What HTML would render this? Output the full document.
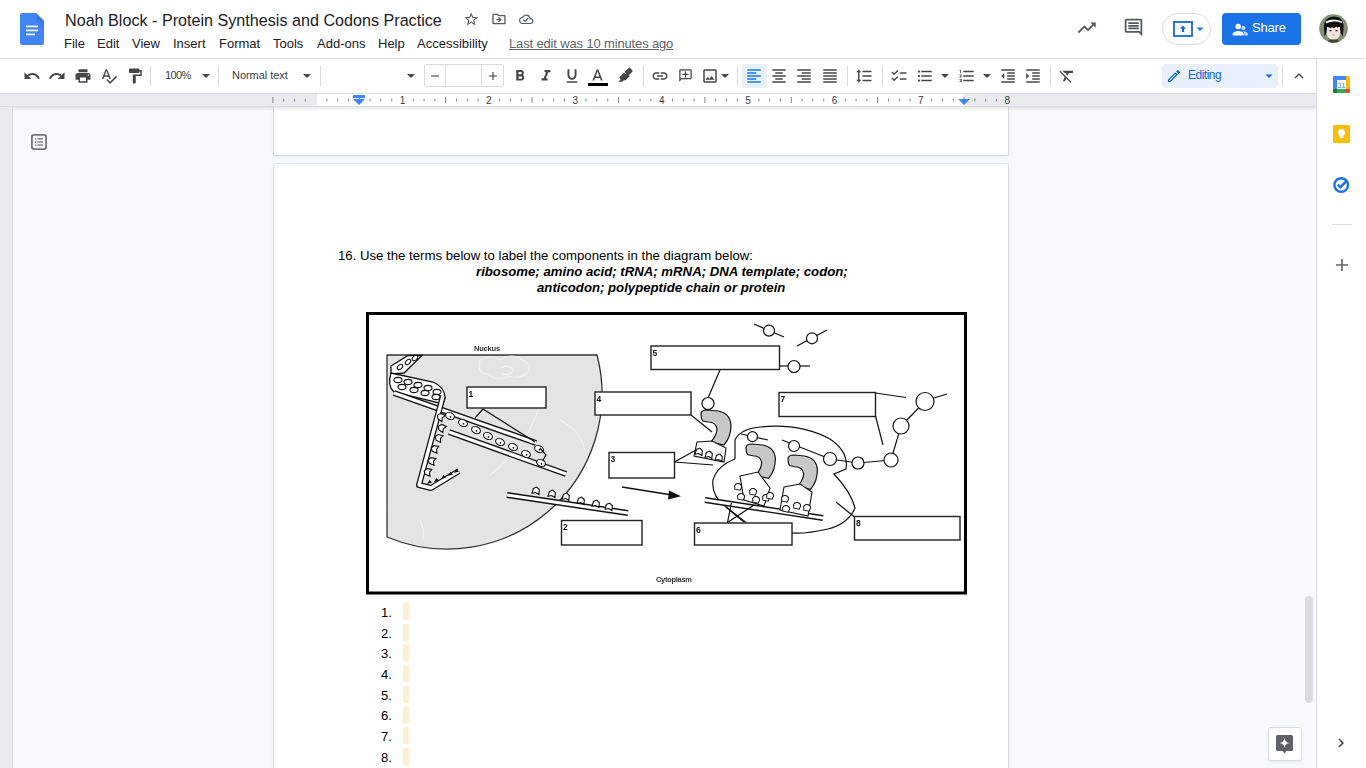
<!DOCTYPE html>
<html><head><meta charset="utf-8">
<style>
*{box-sizing:border-box;margin:0;padding:0}
html,body{width:1366px;height:768px;overflow:hidden;background:#fff;font-family:"Liberation Sans",sans-serif;color:#202124}
div,span{position:absolute}
#hdr{left:0;top:0;width:1366px;height:59px;background:#fff;border-bottom:1px solid #dadce0}
#title{left:65px;top:10px;font-size:16.15px;line-height:20px;color:#202124;white-space:nowrap}
.m{top:36px;font-size:13px;line-height:16px;color:#202124;white-space:nowrap}
#tb{left:0;top:59px;width:1316px;height:34px;background:#fff}
#ruler{left:0;top:93px;width:1316px;height:14px;background:#e9ebee;border-top:1px solid #dadce0}
#canvas{left:0;top:107px;width:1316px;height:661px;background:#f8f9fa;overflow:hidden}
#lstrip{left:0;top:107px;width:13px;height:661px;background:#e8eaed;border-right:1px solid #dadce0}
#side{left:1316px;top:59px;width:50px;height:709px;background:#fff;border-left:1px solid #dadce0}
.page{background:#fff;box-shadow:0 0 0 1px rgba(0,0,0,.06),0 1px 3px rgba(60,64,67,.15)}
.sep{top:66px;width:1px;height:20px;background:#dadce0}
svg{position:absolute;overflow:visible}
.ic{fill:#474747}
.tt{font-size:11px;line-height:14px;color:#3c4043;top:68px;white-space:nowrap}
.rn{top:94px;font-size:10px;line-height:12px;color:#3c4043}
.doc{font-size:13.2px;line-height:16px;color:#000;white-space:nowrap}
.num{left:381px;font-size:13.1px;line-height:16px;color:#000}
.hl{left:403px;width:6px;height:17px;background:#fdf0d2}
</style></head><body>
<div id="hdr"></div>
<div id="tb"></div>
<div id="ruler"></div>
<div id="canvas">
  <div class="page" style="left:274px;top:-200px;width:734px;height:248px"></div>
  <div class="page" style="left:274px;top:57px;width:734px;height:800px"></div>
</div>
<div id="lstrip"></div>
<div id="side"></div>
<svg style="left:0;top:94px" width="1316" height="13" viewBox="0 0 1316 13"><rect x="317" y="0" width="647" height="12" fill="#fff"/><g fill="#80868b"><rect x="272.4" y="3" width="1" height="6"/><rect x="283.2" y="4.7" width="1" height="2.8"/><rect x="294.0" y="4.7" width="1" height="2.8"/><rect x="304.8" y="4.7" width="1" height="2.8"/><rect x="326.4" y="4.7" width="1" height="2.8"/><rect x="337.2" y="4.7" width="1" height="2.8"/><rect x="348.0" y="4.7" width="1" height="2.8"/><rect x="358.8" y="3" width="1" height="6"/><rect x="369.6" y="4.7" width="1" height="2.8"/><rect x="380.4" y="4.7" width="1" height="2.8"/><rect x="391.2" y="4.7" width="1" height="2.8"/><rect x="412.8" y="4.7" width="1" height="2.8"/><rect x="423.6" y="4.7" width="1" height="2.8"/><rect x="434.4" y="4.7" width="1" height="2.8"/><rect x="445.2" y="3" width="1" height="6"/><rect x="456.0" y="4.7" width="1" height="2.8"/><rect x="466.8" y="4.7" width="1" height="2.8"/><rect x="477.6" y="4.7" width="1" height="2.8"/><rect x="499.2" y="4.7" width="1" height="2.8"/><rect x="510.0" y="4.7" width="1" height="2.8"/><rect x="520.8" y="4.7" width="1" height="2.8"/><rect x="531.6" y="3" width="1" height="6"/><rect x="542.4" y="4.7" width="1" height="2.8"/><rect x="553.2" y="4.7" width="1" height="2.8"/><rect x="564.0" y="4.7" width="1" height="2.8"/><rect x="585.6" y="4.7" width="1" height="2.8"/><rect x="596.4" y="4.7" width="1" height="2.8"/><rect x="607.2" y="4.7" width="1" height="2.8"/><rect x="618.0" y="3" width="1" height="6"/><rect x="628.8" y="4.7" width="1" height="2.8"/><rect x="639.6" y="4.7" width="1" height="2.8"/><rect x="650.4" y="4.7" width="1" height="2.8"/><rect x="672.0" y="4.7" width="1" height="2.8"/><rect x="682.8" y="4.7" width="1" height="2.8"/><rect x="693.6" y="4.7" width="1" height="2.8"/><rect x="704.4" y="3" width="1" height="6"/><rect x="715.2" y="4.7" width="1" height="2.8"/><rect x="726.0" y="4.7" width="1" height="2.8"/><rect x="736.8" y="4.7" width="1" height="2.8"/><rect x="758.4" y="4.7" width="1" height="2.8"/><rect x="769.2" y="4.7" width="1" height="2.8"/><rect x="780.0" y="4.7" width="1" height="2.8"/><rect x="790.8" y="3" width="1" height="6"/><rect x="801.6" y="4.7" width="1" height="2.8"/><rect x="812.4" y="4.7" width="1" height="2.8"/><rect x="823.2" y="4.7" width="1" height="2.8"/><rect x="844.8" y="4.7" width="1" height="2.8"/><rect x="855.6" y="4.7" width="1" height="2.8"/><rect x="866.4" y="4.7" width="1" height="2.8"/><rect x="877.2" y="3" width="1" height="6"/><rect x="888.0" y="4.7" width="1" height="2.8"/><rect x="898.8" y="4.7" width="1" height="2.8"/><rect x="909.6" y="4.7" width="1" height="2.8"/><rect x="931.2" y="4.7" width="1" height="2.8"/><rect x="942.0" y="4.7" width="1" height="2.8"/><rect x="952.8" y="4.7" width="1" height="2.8"/><rect x="963.6" y="3" width="1" height="6"/><rect x="974.4" y="4.7" width="1" height="2.8"/><rect x="985.2" y="4.7" width="1" height="2.8"/><rect x="996.0" y="4.7" width="1" height="2.8"/></g><g fill="#3c4043" font-size="10" text-anchor="middle" font-family="Liberation Sans"><text x="402.5" y="9.5">1</text><text x="488.9" y="9.5">2</text><text x="575.3" y="9.5">3</text><text x="661.7" y="9.5">4</text><text x="748.1" y="9.5">5</text><text x="834.5" y="9.5">6</text><text x="920.9" y="9.5">7</text><text x="1007.3" y="9.5">8</text></g><path d="M353 1h12v3h-12z M353 5h12l-6 6z" fill="#4285f4"/><path d="M958 5h12l-6 6z" fill="#4285f4"/></svg>
<div style="left:0;top:106px;width:1316px;height:1px;background:#dadce0"></div><div style="left:13px;top:107px;width:1303px;height:4px;background:linear-gradient(rgba(60,64,67,.12),rgba(60,64,67,0))"></div>
<!-- HEADER -->
<svg style="left:20px;top:13px" width="24" height="32" viewBox="0 0 24 32">
  <path d="M2.5 0H16L24 8V29.5A2.5 2.5 0 0 1 21.5 32H2.5A2.5 2.5 0 0 1 0 29.5V2.5A2.5 2.5 0 0 1 2.5 0Z" fill="#4285f4"/>
  <path d="M16 0L24 8H18A2 2 0 0 1 16 6Z" fill="#3b78e7"/>
  <path d="M16 8L24 16V8Z" fill="#3d73d6" opacity=".5"/>
  <rect x="6" y="12.5" width="12" height="1.8" fill="#f1f1f1"/>
  <rect x="6" y="16.5" width="12" height="1.8" fill="#f1f1f1"/>
  <rect x="6" y="20.5" width="9" height="1.8" fill="#f1f1f1"/>
</svg>
<div id="title">Noah Block - Protein Synthesis and Codons Practice</div>
<svg style="left:463.3px;top:10.8px" width="16.5" height="16.5" viewBox="0 0 24 24"><path fill="#555a5e" d="M22 9.24l-7.19-.62L12 2 9.19 8.63 2 9.24l5.46 4.73L5.82 21 12 17.27 18.18 21l-1.63-7.03L22 9.24zM12 15.4l-3.76 2.27 1-4.28-3.32-2.88 4.38-.38L12 6.1l1.71 4.04 4.38.38-3.32 2.88 1 4.28L12 15.4z"/></svg>
<svg style="left:490.6px;top:10.5px" width="16" height="16" viewBox="0 0 24 24"><path fill="#555a5e" d="M20 6h-8l-2-2H4c-1.1 0-1.99.9-1.99 2L2 18c0 1.1.9 2 2 2h16c1.1 0 2-.9 2-2V8c0-1.1-.9-2-2-2zm0 12H4V6h5.17l2 2H20v10zm-7.84-6H8v2h4.16l-1.59 1.59L11.99 17 16 13.01 11.99 9l-1.41 1.41L12.16 12z"/></svg>
<svg style="left:518.5px;top:11.6px" width="14.5" height="14.5" viewBox="0 0 24 24"><path fill="#555a5e" d="M19.35 10.04C18.67 6.59 15.64 4 12 4 9.11 4 6.6 5.64 5.35 8.04 2.34 8.36 0 10.91 0 14c0 3.31 2.69 6 6 6h13c2.760 0 5-2.24 5-5 0-2.64-2.05-4.78-4.65-4.96zM19 18H6c-2.21 0-4-1.790-4-4 0-2.05 1.53-3.76 3.56-3.97l1.07-.11.5-.95C8.08 7.14 9.94 6 12 6c2.62 0 4.88 1.86 5.39 4.43l.3 1.5 1.53.11c1.56.1 2.78 1.41 2.78 2.96 0 1.65-1.35 3-3 3zm-9-3.82l-2.09-2.09L6.5 13.5 10 17l6.01-6.01-1.41-1.41z"/></svg>
<div class="m" style="left:64px">File</div>
<div class="m" style="left:97px">Edit</div>
<div class="m" style="left:132px">View</div>
<div class="m" style="left:173px">Insert</div>
<div class="m" style="left:219px">Format</div>
<div class="m" style="left:273px">Tools</div>
<div class="m" style="left:317px">Add-ons</div>
<div class="m" style="left:378px">Help</div>
<div class="m" style="left:417px">Accessibility</div>
<div class="m" style="left:509px;color:#5f6368;text-decoration:underline;letter-spacing:-0.15px">Last edit was 10 minutes ago</div>
<!-- right header -->
<svg style="left:1075.8px;top:17.2px" width="21.5" height="21.5" viewBox="0 0 24 24"><path fill="#555a5e" d="M16 6l2.29 2.29-4.88 4.88-4-4L2 16.59 3.41 18l6-6 4 4 6.3-6.29L22 12V6z"/></svg>
<svg style="left:1122.6px;top:17.4px" width="21" height="21" viewBox="0 0 24 24"><path fill="#555a5e" d="M21.99 4c0-1.1-.89-2-1.99-2H4c-1.1 0-2 .9-2 2v12c0 1.1.9 2 2 2h14l4 4-.01-18zM20 4v13.17L18.83 16H4V4h16zM6 12h12v2H6zm0-3h12v2H6zm0-3h12v2H6z"/></svg>
<div style="left:1162px;top:13px;width:49px;height:32px;border:1px solid #dadce0;border-radius:16px;background:#fff"></div>
<svg style="left:1173px;top:21px" width="20" height="16" viewBox="0 0 20 16"><rect x="1" y="1" width="18" height="14" fill="none" stroke="#1967d2" stroke-width="1.8"/><path d="M10 4.5l-3.2 3.2h2.1V11h2.2V7.7h2.1z" fill="#1967d2"/></svg>
<svg style="left:1195px;top:24px" width="10" height="10" viewBox="0 0 10 10"><path d="M1.5 3.5h7L5 7z" fill="#1a73e8"/></svg>
<div style="left:1222px;top:13px;width:79px;height:32px;background:#1a73e8;border-radius:4px"></div>
<svg style="left:1232px;top:21px" width="16.5" height="16.5" viewBox="0 0 24 24"><circle cx="9" cy="8" r="4" fill="#fff"/><path d="M1 19c0-3 5-4.5 8-4.5s8 1.5 8 4.5v2H1z" fill="#fff"/><circle cx="16.5" cy="10" r="3" fill="#c6dafc"/><path d="M15 15c3 0 8 1 8 4v2h-5v-2c0-1.5-1-3-3-4z" fill="#c6dafc"/></svg>
<div style="left:1252px;top:19.5px;font-size:13px;line-height:16px;color:#fff;letter-spacing:-0.2px">Share</div>
<svg style="left:1319px;top:14px" width="29" height="29" viewBox="0 0 29 29">
  <circle cx="14.5" cy="14.5" r="14.3" fill="#838f73"/>
  <path d="M5 14Q4 4 14.5 2.5Q25 3 24.5 13L24 22L20 18H9L5.5 22Z" fill="#0d0d0d"/>
  <path d="M8 13Q14 11 21 13L21.5 20Q19 26 14.5 26Q9.5 26 7.5 20Z" fill="#efe4dc"/>
  <path d="M7.5 11Q11 16 13 13Q15 15.5 17 12.5Q19 15 21.5 11L21 8H8Z" fill="#0d0d0d"/>
  <path d="M6.5 7.5Q14.5 3.5 23 7.5L22.5 9Q14.5 6 7 9.5Z" fill="#f2f2f2"/>
  <rect x="10.5" y="16" width="2" height="1.3" fill="#222"/><rect x="16.5" y="16" width="2" height="1.3" fill="#222"/>
  <ellipse cx="14.5" cy="21" rx="1.5" ry="1" fill="#e8b8b0"/>
  <path d="M9 27.5Q14.5 30 20 27.5L19 25.5H10Z" fill="#3a4a35"/>
</svg>
<!-- TOOLBAR -->
<svg style="left:23px;top:67px" width="18" height="18" viewBox="0 0 24 24"><path class="ic" d="M12.5 8c-2.650 0-5.05.99-6.9 2.6L2 7v9h9l-3.62-3.62c1.39-1.16 3.16-1.88 5.12-1.880 3.54 0 6.55 2.31 7.6 5.5l2.37-.78C21.08 11.03 17.15 8 12.5 8z"/></svg>
<svg style="left:48px;top:67px" width="18" height="18" viewBox="0 0 24 24"><path class="ic" d="M18.4 10.6C16.55 8.99 14.15 8 11.5 8c-4.65 0-8.58 3.03-9.96 7.22L3.9 16c1.05-3.19 4.05-5.5 7.6-5.5 1.95 0 3.73.72 5.12 1.88L13 16h9V7l-3.6 3.6z"/></svg>
<svg style="left:74px;top:67px" width="18" height="18" viewBox="0 0 24 24"><path class="ic" d="M19 8H5c-1.66 0-3 1.34-3 3v6h4v4h12v-4h4v-6c0-1.66-1.34-3-3-3zm-3 11H8v-5h8v5zm3-7c-.55 0-1-.45-1-1s.45-1 1-1 1 .45 1 1-.45 1-1 1zm-1-9H6v4h12V3z"/></svg>
<svg style="left:100px;top:67px" width="18" height="18" viewBox="0 0 24 24"><path class="ic" d="M12.45 16h2.09L9.43 3H7.57L2.46 16h2.09l1.12-3h5.640l1.14 3zm-6.02-5L8.5 5.48 10.57 11H6.43zm15.16.59l-8.09 8.09L9.83 16l-1.41 1.41 5.09 5.09L23 13l-1.41-1.41z"/></svg>
<svg style="left:126px;top:67px" width="18" height="18" viewBox="0 0 24 24"><path class="ic" d="M18 4V3c0-.55-.45-1-1-1H5c-.55 0-1 .45-1 1v4c0 .55.45 1 1 1h12c.55 0 1-.45 1-1V6h1v4H9v11c0 .55.45 1 1 1h2c.55 0 1-.45 1-1v-9h8V4h-3z"/></svg>
<div class="sep" style="left:150px"></div>
<div class="tt" style="left:165px;letter-spacing:-0.6px">100%</div>
<svg style="left:200px;top:70px" width="12" height="12" viewBox="0 0 12 12"><path class="ic" d="M2 4h8L6 8z"/></svg>
<div class="sep" style="left:218px"></div>
<div class="tt" style="left:232px;letter-spacing:-0.05px">Normal text</div>
<svg style="left:301px;top:70px" width="12" height="12" viewBox="0 0 12 12"><path class="ic" d="M2 4h8L6 8z"/></svg>
<div class="sep" style="left:320px"></div>
<svg style="left:405px;top:70px" width="12" height="12" viewBox="0 0 12 12"><path class="ic" d="M2 4h8L6 8z"/></svg>
<div style="left:424px;top:64px;width:80px;height:23px;border:1px solid #dadce0;border-radius:2px"></div>
<div style="left:445px;top:65px;width:1px;height:21px;background:#dadce0"></div>
<div style="left:481px;top:65px;width:1px;height:21px;background:#dadce0"></div>
<svg style="left:428px;top:69px" width="14" height="14" viewBox="0 0 24 24"><path class="ic" d="M19 13H5v-2h14v2z"/></svg>
<svg style="left:486px;top:69px" width="14" height="14" viewBox="0 0 24 24"><path class="ic" d="M19 13h-6v6h-2v-6H5v-2h6V5h2v6h6v2z"/></svg>
<svg style="left:511px;top:67px" width="18" height="18" viewBox="0 0 24 24"><path class="ic" d="M15.6 10.79c.97-.67 1.65-1.77 1.65-2.79 0-2.26-1.75-4-4-4H7v14h7.04c2.09 0 3.71-1.7 3.71-3.79 0-1.52-.86-2.82-2.15-3.42zM10 6.5h3c.83 0 1.5.67 1.5 1.5s-.67 1.5-1.5 1.5h-3v-3zm3.5 9H10v-3h3.5c.83 0 1.5.67 1.5 1.5s-.67 1.5-1.5 1.5z"/></svg>
<svg style="left:537px;top:67px" width="18" height="18" viewBox="0 0 24 24"><path class="ic" d="M10 4v3h2.21l-3.42 8H6v3h8v-3h-2.21l3.42-8H18V4z"/></svg>
<svg style="left:563px;top:67px" width="18" height="18" viewBox="0 0 24 24"><path class="ic" d="M12 17c3.31 0 6-2.69 6-6V3h-2.5v8c0 1.93-1.57 3.5-3.5 3.5S8.5 12.93 8.5 11V3H6v8c0 3.31 2.690 6 6 6zm-7 2v2h14v-2H5z"/></svg>
<svg style="left:588px;top:67px" width="19" height="19" viewBox="0 0 24 24"><path class="ic" d="M11 3L5.5 17h2.25l1.12-3h6.25l1.12 3h2.25L13 3h-2zm-1.38 9L12 5.67 14.38 12H9.62z"/></svg>
<div style="left:588px;top:83px;width:20px;height:3px;background:#000"></div>
<svg style="left:617px;top:67px" width="16" height="16" viewBox="0 0 24 24"><path class="ic" d="M18.5 1.15c-.53 0-1.04.19-1.43.58l-5.81 5.82 5.65 5.65 5.82-5.81c.77-.78.77-2.04 0-2.83l-2.84-2.83c-.39-.39-.89-.58-1.39-.58zM10.3 8.5l-5.96 5.96c-.78.78-.78 2.04 0 2.83L5.59 18.5 2 22h6l2.56-2.56c.78.75 2.03.74 2.79-.02l5.95-5.96L10.3 8.5z"/></svg>
<div class="sep" style="left:643px"></div>
<svg style="left:651px;top:67px" width="18" height="18" viewBox="0 0 24 24"><path class="ic" d="M3.9 12c0-1.71 1.39-3.1 3.1-3.1h4V7H7c-2.76 0-5 2.24-5 5s2.24 5 5 5h4v-1.9H7c-1.71 0-3.1-1.39-3.1-3.1zM8 13h8v-2H8v2zm9-6h-4v1.9h4c1.71 0 3.1 1.39 3.1 3.1s-1.39 3.1-3.1 3.1h-4V17h4c2.76 0 5-2.24 5-5s-2.24-5-5-5z"/></svg>
<svg style="left:677.7px;top:67.9px" width="15" height="15" viewBox="0 0 24 24"><g transform="translate(24 0) scale(-1 1)"><path class="ic" d="M22 4c0-1.1-.9-2-2-2H4c-1.1 0-2 .9-2 2v12c0 1.1.9 2 2 2h14l4 4V4zm-2 13.17L18.83 16H4V4h16v13.17zM13 5h-2v4H7v2h4v4h2v-4h4V9h-4z"/></g></svg>
<svg style="left:701px;top:67px" width="18" height="18" viewBox="0 0 24 24"><path class="ic" d="M19 5v14H5V5h14m0-2H5c-1.1 0-2 .9-2 2v14c0 1.1.9 2 2 2h14c1.1 0 2-.9 2-2V5c0-1.1-.9-2-2-2zm-4.86 8.86l-3 3.87L9 13.14 6 17h12l-3.86-5.14z"/></svg>
<svg style="left:719px;top:70px" width="12" height="12" viewBox="0 0 12 12"><path class="ic" d="M2 4h8L6 8z"/></svg>
<div class="sep" style="left:737px"></div>
<div style="left:742px;top:64px;width:25px;height:24px;background:#e8f0fe;border-radius:2px"></div>
<svg style="left:745px;top:67px" width="18" height="18" viewBox="0 0 24 24"><path fill="#1a73e8" d="M15 15H3v2h12v-2zm0-8H3v2h12V7zM3 13h18v-2H3v2zm0 8h18v-2H3v2zM3 3v2h18V3H3z"/></svg>
<svg style="left:770px;top:67px" width="18" height="18" viewBox="0 0 24 24"><path class="ic" d="M7 15v2h10v-2H7zm-4 6h18v-2H3v2zm0-8h18v-2H3v2zm4-6v2h10V7H7zM3 3v2h18V3H3z"/></svg>
<svg style="left:795px;top:67px" width="18" height="18" viewBox="0 0 24 24"><path class="ic" d="M3 21h18v-2H3v2zm6-4h12v-2H9v2zm-6-4h18v-2H3v2zm6-4h12V7H9v2zM3 3v2h18V3H3z"/></svg>
<svg style="left:821px;top:67px" width="18" height="18" viewBox="0 0 24 24"><path class="ic" d="M3 21h18v-2H3v2zm0-4h18v-2H3v2zm0-4h18v-2H3v2zm0-4h18V7H3v2zm0-6v2h18V3H3z"/></svg>
<div class="sep" style="left:847px"></div>
<svg style="left:855px;top:67px" width="18" height="18" viewBox="0 0 24 24"><path class="ic" d="M6 7h2.5L5 3.5 1.5 7H4v10H1.5L5 20.5 8.5 17H6V7zm4-2v2h12V5H10zm0 14h12v-2H10v2zm0-6h12v-2H10v2z"/></svg>
<div class="sep" style="left:882px"></div>
<svg style="left:890px;top:67px" width="18" height="18" viewBox="0 0 24 24"><path class="ic" d="M22,7h-9v2h9V7z M22,15h-9v2h9V15z M5.54,11L2,7.46l1.41-1.41l2.12,2.12l4.24-4.24l1.41,1.41L5.54,11z M5.54,19L2,15.46l1.41-1.41 l2.12,2.12l4.24-4.24l1.41,1.41L5.54,19z"/></svg>
<svg style="left:916px;top:67px" width="18" height="18" viewBox="0 0 24 24"><path class="ic" d="M4 10.5c-.83 0-1.5.67-1.5 1.5s.67 1.5 1.5 1.5 1.5-.67 1.5-1.5-.67-1.5-1.5-1.5zm0-6c-.83 0-1.5.67-1.5 1.5S3.17 7.5 4 7.5 5.5 6.83 5.5 6 4.83 4.5 4 4.5zm0 12c-.83 0-1.5.68-1.5 1.5s.68 1.5 1.5 1.5 1.5-.68 1.5-1.5-.67-1.5-1.5-1.5zM7 19h14v-2H7v2zm0-6h14v-2H7v2zm0-8v2h14V5H7z"/></svg>
<svg style="left:939px;top:70px" width="12" height="12" viewBox="0 0 12 12"><path class="ic" d="M2 4h8L6 8z"/></svg>
<svg style="left:958px;top:67px" width="18" height="18" viewBox="0 0 24 24"><path class="ic" d="M2 17h2v.5H3v1h1v.5H2v1h3v-4H2v1zm1-9h1V4H2v1h1v3zm-1 3h1.8L2 13.1v.9h3v-1H3.2L5 10.9V10H2v1zm5-6v2h14V5H7zm0 14h14v-2H7v2zm0-6h14v-2H7v2z"/></svg>
<svg style="left:981px;top:70px" width="12" height="12" viewBox="0 0 12 12"><path class="ic" d="M2 4h8L6 8z"/></svg>
<svg style="left:999px;top:67px" width="18" height="18" viewBox="0 0 24 24"><path class="ic" d="M11 17h10v-2H11v2zm-8-5l4 4V8l-4 4zm0 9h18v-2H3v2zM3 3v2h18V3H3zm8 6h10V7H11v2zm0 4h10v-2H11v2z"/></svg>
<svg style="left:1024px;top:67px" width="18" height="18" viewBox="0 0 24 24"><path class="ic" d="M3 21h18v-2H3v2zM3 8v8l4-4-4-4zm8 9h10v-2H11v2zM3 3v2h18V3H3zm8 6h10V7H11v2zm0 4h10v-2H11v2z"/></svg>
<div class="sep" style="left:1050px"></div>
<svg style="left:1058px;top:67px" width="18" height="18" viewBox="0 0 24 24"><path class="ic" d="M3.27 5L2 6.27l6.97 6.97L6.5 19h3l1.57-3.66L16.73 21 18 19.73 3.55 5.27 3.27 5zM6 5v.18L8.82 8h2.4l-.72 1.68 2.1 2.1L14.21 8H20V5H6z"/></svg>
<div style="left:1162px;top:64px;width:116px;height:24px;background:#e8f0fe;border-radius:4px"></div>
<svg style="left:1166px;top:68px" width="16" height="16" viewBox="0 0 24 24"><path fill="#1967d2" d="M3 17.25V21h3.75L17.81 9.94l-3.75-3.75L3 17.25zM5.92 19H5v-.92l9.06-9.06.92.92L5.92 19zM20.71 5.63l-2.34-2.34c-.2-.2-.45-.29-.71-.29s-.51.1-.7.29l-1.83 1.83 3.75 3.75 1.83-1.830c.39-.39.39-1.02 0-1.41z"/></svg>
<div style="left:1188px;top:68px;font-size:12px;line-height:15px;color:#1967d2;letter-spacing:-0.5px">Editing</div>
<svg style="left:1263px;top:70px" width="12" height="12" viewBox="0 0 12 12"><path fill="#1967d2" d="M2.5 4.5h7L6 8z"/></svg>
<div class="sep" style="left:1282px"></div>
<svg style="left:1290px;top:67px" width="18" height="18" viewBox="0 0 24 24"><path class="ic" d="M12 8l-6 6 1.41 1.41L12 10.83l4.59 4.58L18 14z"/></svg>

<!-- LEFT OUTLINE ICON -->
<svg style="left:31px;top:134px" width="16" height="16" viewBox="0 0 16 16"><rect x="0.9" y="0.9" width="14.2" height="14.2" rx="2" fill="none" stroke="#757575" stroke-width="1.8"/><g fill="#757575"><rect x="4" y="4.2" width="1.3" height="1.3"/><rect x="6.5" y="4.2" width="5.5" height="1.3"/><rect x="4" y="7.3" width="1.3" height="1.3"/><rect x="6.5" y="7.3" width="5.5" height="1.3"/><rect x="4" y="10.4" width="1.3" height="1.3"/><rect x="6.5" y="10.4" width="5.5" height="1.3"/></g></svg>
<!-- SIDE PANEL -->
<svg style="left:1333px;top:76px" width="17" height="17" viewBox="0 0 17 17">
 <rect x="0" y="0" width="17" height="17" rx="1.5" fill="#fbbc04"/>
 <path d="M0 4V15.5A1.5 1.5 0 0 0 1.5 17H13V13H4V4Z" fill="#34a853"/>
 <path d="M0 4V15.5A1.5 1.5 0 0 0 1.5 17H4V4Z" fill="#188038"/>
 <path d="M0 1.5A1.5 1.5 0 0 1 1.5 0H13V4H4V13H0Z" fill="#4285f4"/>
 <path d="M13 13H17V15.5A1.5 1.5 0 0 1 15.5 17H13Z" fill="#ea4335"/>
 <rect x="4" y="4" width="9" height="9" fill="#fff"/>
 <text x="8.5" y="11.6" font-size="7" text-anchor="middle" fill="#4285f4" font-family="Liberation Sans">31</text>
</svg>
<svg style="left:1333px;top:125px" width="17" height="18" viewBox="0 0 17 18">
 <rect x="0" y="0" width="17" height="18" rx="1.5" fill="#fbbc04"/>
 <circle cx="8.5" cy="7.5" r="3.5" fill="#fff"/><rect x="6.8" y="10" width="3.4" height="3" fill="#fff"/>
</svg>
<svg style="left:1333px;top:176px" width="17" height="17" viewBox="0 0 17 17">
 <circle cx="8.2" cy="9" r="6.8" fill="none" stroke="#1a73e8" stroke-width="2.4"/>
 <path d="M4.8 8.6l2.6 2.6 6-6" fill="none" stroke="#1a73e8" stroke-width="2.4"/>
</svg>
<div style="left:1332px;top:224px;width:20px;height:1px;background:#dadce0"></div>
<svg style="left:1335px;top:258px" width="14" height="14" viewBox="0 0 14 14"><path d="M6.2 1h1.6v12H6.2z M1 6.2h12v1.6H1z" fill="#5f6368"/></svg>
<svg style="left:1332px;top:734px" width="18" height="18" viewBox="0 0 24 24"><path class="ic" d="M10 6L8.59 7.41 13.17 12l-4.58 4.59L10 18l6-6z"/></svg>
<!-- SCROLLBAR -->
<div style="left:1305px;top:596px;width:8px;height:107px;background:#dadce0;border-radius:4px"></div>
<!-- EXPLORE -->
<div style="left:1268px;top:727px;width:34px;height:34px;background:#fff;border:1px solid #dadce0;border-radius:3px;box-shadow:0 1px 2px rgba(0,0,0,.08)"></div>
<svg style="left:1276px;top:735px" width="17" height="19" viewBox="0 0 17 19"><path d="M1.5 0H15.5A1.5 1.5 0 0 1 17 1.5V14.5A1.5 1.5 0 0 1 15.5 16H10.5L8.5 18.5L6.5 16H1.5A1.5 1.5 0 0 1 0 14.5V1.5A1.5 1.5 0 0 1 1.5 0Z" fill="#5f6368"/><path d="M8.5 3Q9 7.5 13.5 8Q9 8.5 8.5 13Q8 8.5 3.5 8Q8 7.5 8.5 3Z" fill="#fff"/></svg>
<!-- DOC TEXT -->
<div class="doc" style="left:338px;top:248px">16. Use the terms below to label the components in the diagram below:</div>
<div class="doc" style="left:476px;top:264px;font-weight:bold;font-style:italic">ribosome; amino acid; tRNA; mRNA; DNA template; codon;</div>
<div class="doc" style="left:537px;top:280px;font-weight:bold;font-style:italic">anticodon; polypeptide chain or protein</div>
<!-- LIST -->
<div class="hl" style="top:603px"></div><div class="hl" style="top:624px"></div><div class="hl" style="top:644px"></div><div class="hl" style="top:665px"></div><div class="hl" style="top:686px"></div><div class="hl" style="top:706px"></div><div class="hl" style="top:727px"></div><div class="hl" style="top:748px"></div>
<div class="num" style="top:605px">1.</div><div class="num" style="top:626px">2.</div><div class="num" style="top:646px">3.</div><div class="num" style="top:667px">4.</div><div class="num" style="top:688px">5.</div><div class="num" style="top:708px">6.</div><div class="num" style="top:729px">7.</div><div class="num" style="top:750px">8.</div>
<!-- DIAGRAM -->
<svg style="left:0;top:0;filter:blur(0.3px)" width="1366" height="768" viewBox="0 0 1366 768"><rect x="367.5" y="313.5" width="598" height="279.5" fill="#fff" stroke="#000" stroke-width="3"/><path d="M387,355 H597 A155,155 0 0 1 387,537 Z" fill="#e4e4e4" stroke="#333" stroke-width="1.3"/><g fill="none" stroke="#f2f2f2" stroke-width="1.2" opacity=".9"><path d="M480,360 q10,-6 20,0 q12,-8 22,0 q10,4 6,12 q-8,8 -20,4 q-10,6 -20,-2 q-12,0 -8,-14z"/><path d="M500,368 q8,-4 14,2 q-4,6 -12,4"/><path d="M540,405 q-6,20 -20,40 q-10,15 -30,30"/><path d="M560,420 q20,10 25,30"/><path d="M420,520 q5,10 3,20"/></g><text x="474" y="351" font-size="7.5" font-weight="bold" fill="#333" font-family="Liberation Sans" letter-spacing="-0.2">Nuckus</text><path d="M408,355.5 L422,355.5 L404,373 L391,374 L391,366 Z" fill="#fff" stroke="#111" stroke-width="1.3"/><ellipse cx="400" cy="367" rx="3.2" ry="2" transform="rotate(-40 400 367)" fill="#fff" stroke="#111" stroke-width="1"/><ellipse cx="408" cy="362" rx="3.2" ry="2" transform="rotate(-40 408 362)" fill="#fff" stroke="#111" stroke-width="1"/><ellipse cx="415" cy="358" rx="3.2" ry="2" transform="rotate(-40 415 358)" fill="#fff" stroke="#111" stroke-width="1"/><path d="M391,373 L433,382 Q445,387 445,398 L443,404 L394,392 Q387,386 391,373 Z" fill="#fff" stroke="#111" stroke-width="1.3"/><ellipse cx="398" cy="380" rx="4" ry="2.6" fill="#fff" stroke="#111" stroke-width="1.1"/><ellipse cx="408" cy="382" rx="4" ry="2.6" fill="#fff" stroke="#111" stroke-width="1.1"/><ellipse cx="418" cy="385" rx="4" ry="2.6" fill="#fff" stroke="#111" stroke-width="1.1"/><ellipse cx="428" cy="388" rx="4" ry="2.6" fill="#fff" stroke="#111" stroke-width="1.1"/><ellipse cx="437" cy="392" rx="4" ry="2.6" fill="#fff" stroke="#111" stroke-width="1.1"/><ellipse cx="402" cy="387" rx="4" ry="2.6" fill="#fff" stroke="#111" stroke-width="1.1"/><ellipse cx="414" cy="390" rx="4" ry="2.6" fill="#fff" stroke="#111" stroke-width="1.1"/><ellipse cx="425" cy="393" rx="4" ry="2.6" fill="#fff" stroke="#111" stroke-width="1.1"/><ellipse cx="436" cy="397" rx="4" ry="2.6" fill="#fff" stroke="#111" stroke-width="1.1"/><path d="M394,393 L536,443" fill="none" stroke="#111" stroke-width="6" stroke-linejoin="round" stroke-linecap="butt"/><path d="M394,393 L536,443" fill="none" stroke="#fff" stroke-width="3.4" stroke-linejoin="round" stroke-linecap="butt"/><path d="M443,396 L419,485 L431,488 L459,471" fill="none" stroke="#111" stroke-width="6" stroke-linejoin="round" stroke-linecap="butt"/><path d="M443,396 L419,485 L431,488 L459,471" fill="none" stroke="#fff" stroke-width="3.4" stroke-linejoin="round" stroke-linecap="butt"/><path d="M449,432 L566,474" fill="none" stroke="#111" stroke-width="6" stroke-linejoin="round" stroke-linecap="butt"/><path d="M449,432 L566,474" fill="none" stroke="#fff" stroke-width="3.4" stroke-linejoin="round" stroke-linecap="butt"/><ellipse cx="450" cy="416" rx="4.6" ry="3.3" transform="rotate(25 450 416)" fill="#fff" stroke="#111" stroke-width="1.1"/><circle cx="450.5" cy="416.8" r="0.9" fill="#111"/><ellipse cx="463" cy="423" rx="4.6" ry="3.3" transform="rotate(25 463 423)" fill="#fff" stroke="#111" stroke-width="1.1"/><circle cx="463.5" cy="423.8" r="0.9" fill="#111"/><ellipse cx="476" cy="430" rx="4.6" ry="3.3" transform="rotate(25 476 430)" fill="#fff" stroke="#111" stroke-width="1.1"/><circle cx="476.5" cy="430.8" r="0.9" fill="#111"/><ellipse cx="488" cy="436" rx="4.6" ry="3.3" transform="rotate(25 488 436)" fill="#fff" stroke="#111" stroke-width="1.1"/><circle cx="488.5" cy="436.8" r="0.9" fill="#111"/><ellipse cx="500" cy="442" rx="4.6" ry="3.3" transform="rotate(25 500 442)" fill="#fff" stroke="#111" stroke-width="1.1"/><circle cx="500.5" cy="442.8" r="0.9" fill="#111"/><ellipse cx="513" cy="447" rx="4.6" ry="3.3" transform="rotate(25 513 447)" fill="#fff" stroke="#111" stroke-width="1.1"/><circle cx="513.5" cy="447.8" r="0.9" fill="#111"/><ellipse cx="526" cy="454" rx="4.6" ry="3.3" transform="rotate(25 526 454)" fill="#fff" stroke="#111" stroke-width="1.1"/><circle cx="526.5" cy="454.8" r="0.9" fill="#111"/><ellipse cx="541" cy="463" rx="4.6" ry="3.3" transform="rotate(25 541 463)" fill="#fff" stroke="#111" stroke-width="1.1"/><circle cx="541.5" cy="463.8" r="0.9" fill="#111"/><ellipse cx="539" cy="449" rx="4.6" ry="3.3" transform="rotate(25 539 449)" fill="#fff" stroke="#111" stroke-width="1.1"/><circle cx="539.5" cy="449.8" r="0.9" fill="#111"/><path transform="translate(441 417) rotate(-60)" d="M-3.5,3 L-3,-2 L0,-4 L3,-2 L3.5,3 L0,1.5 Z" fill="#fff" stroke="#111" stroke-width="1.1"/><path transform="translate(442 428) rotate(-60)" d="M-3.5,3 L-3,-2 L0,-4 L3,-2 L3.5,3 L0,1.5 Z" fill="#fff" stroke="#111" stroke-width="1.1"/><path transform="translate(439 438) rotate(-70)" d="M-3.5,3 L-3,-2 L0,-4 L3,-2 L3.5,3 L0,1.5 Z" fill="#fff" stroke="#111" stroke-width="1.1"/><path transform="translate(435 449) rotate(-75)" d="M-3.5,3 L-3,-2 L0,-4 L3,-2 L3.5,3 L0,1.5 Z" fill="#fff" stroke="#111" stroke-width="1.1"/><path transform="translate(432 461) rotate(-75)" d="M-3.5,3 L-3,-2 L0,-4 L3,-2 L3.5,3 L0,1.5 Z" fill="#fff" stroke="#111" stroke-width="1.1"/><path transform="translate(428 472) rotate(-75)" d="M-3.5,3 L-3,-2 L0,-4 L3,-2 L3.5,3 L0,1.5 Z" fill="#fff" stroke="#111" stroke-width="1.1"/><path d="M427,484 l2.5,-4 l2.5,2.5z" fill="#111"/><path d="M434,482 l2.5,-4 l2.5,2.5z" fill="#111"/><path d="M441,479 l2.5,-4 l2.5,2.5z" fill="#111"/><path d="M448,476 l2.5,-4 l2.5,2.5z" fill="#111"/><path d="M454,473 l2.5,-4 l2.5,2.5z" fill="#111"/><path d="M540,448 L546,455 L543,460" fill="none" stroke="#111" stroke-width="1.2"/><path d="M507,495 L628,513" fill="none" stroke="#111" stroke-width="6" stroke-linejoin="round" stroke-linecap="butt"/><path d="M507,495 L628,513" fill="none" stroke="#fff" stroke-width="3.2" stroke-linejoin="round" stroke-linecap="butt"/><path transform="translate(536 491) rotate(10)" d="M-3.5,3 L-3,-2 L0,-4 L3,-2 L3.5,3 L0,1.5 Z" fill="#fff" stroke="#111" stroke-width="1.1"/><path transform="translate(552 494) rotate(10)" d="M-3.5,3 L-3,-2 L0,-4 L3,-2 L3.5,3 L0,1.5 Z" fill="#fff" stroke="#111" stroke-width="1.1"/><path transform="translate(566 497) rotate(10)" d="M-3.5,3 L-3,-2 L0,-4 L3,-2 L3.5,3 L0,1.5 Z" fill="#fff" stroke="#111" stroke-width="1.1"/><path transform="translate(581 501) rotate(10)" d="M-3.5,3 L-3,-2 L0,-4 L3,-2 L3.5,3 L0,1.5 Z" fill="#fff" stroke="#111" stroke-width="1.1"/><path transform="translate(596 504) rotate(10)" d="M-3.5,3 L-3,-2 L0,-4 L3,-2 L3.5,3 L0,1.5 Z" fill="#fff" stroke="#111" stroke-width="1.1"/><path transform="translate(609 507) rotate(10)" d="M-3.5,3 L-3,-2 L0,-4 L3,-2 L3.5,3 L0,1.5 Z" fill="#fff" stroke="#111" stroke-width="1.1"/><rect x="467" y="387" width="79" height="21" fill="#fff" stroke="#222" stroke-width="1.4"/><text x="468.5" y="396.5" font-size="8.5" font-weight="bold" fill="#111" font-family="Liberation Sans">1</text><rect x="561.5" y="520.5" width="80.5" height="24.5" fill="#fff" stroke="#222" stroke-width="1.4"/><text x="563" y="530" font-size="8.5" font-weight="bold" fill="#111" font-family="Liberation Sans">2</text><rect x="609" y="452.5" width="65.5" height="25.5" fill="#fff" stroke="#222" stroke-width="1.4"/><text x="610.5" y="462" font-size="8.5" font-weight="bold" fill="#111" font-family="Liberation Sans">3</text><rect x="595" y="392" width="96" height="23" fill="#fff" stroke="#222" stroke-width="1.4"/><text x="596.5" y="401.5" font-size="8.5" font-weight="bold" fill="#111" font-family="Liberation Sans">4</text><rect x="651" y="346" width="128.5" height="23.5" fill="#fff" stroke="#222" stroke-width="1.4"/><text x="652.5" y="355.5" font-size="8.5" font-weight="bold" fill="#111" font-family="Liberation Sans">5</text><rect x="694.5" y="523" width="97.5" height="22" fill="#fff" stroke="#222" stroke-width="1.4"/><text x="696" y="532.5" font-size="8.5" font-weight="bold" fill="#111" font-family="Liberation Sans">6</text><rect x="779" y="392.5" width="96.5" height="24" fill="#fff" stroke="#222" stroke-width="1.4"/><text x="780.5" y="402" font-size="8.5" font-weight="bold" fill="#111" font-family="Liberation Sans">7</text><rect x="854.5" y="516.5" width="105.5" height="23.5" fill="#fff" stroke="#222" stroke-width="1.4"/><text x="856" y="526" font-size="8.5" font-weight="bold" fill="#111" font-family="Liberation Sans">8</text><path d="M483,409 L475,418" fill="none" stroke="#111" stroke-width="1.2"/><path d="M483,409 L535,442" fill="none" stroke="#111" stroke-width="1.2"/><path d="M691,415 L712,432" fill="none" stroke="#111" stroke-width="1.2"/><path d="M674.5,462 L696,450" fill="none" stroke="#111" stroke-width="1.2"/><path d="M674.5,462 L713,465" fill="none" stroke="#111" stroke-width="1.2"/><path d="M720,370 L708,398" fill="none" stroke="#111" stroke-width="1.2"/><path d="M779.5,366 L810,366" fill="none" stroke="#111" stroke-width="1.2"/><path d="M875.5,393 L906,397.5" fill="none" stroke="#111" stroke-width="1.2"/><path d="M875.5,416 L883,445" fill="none" stroke="#111" stroke-width="1.2"/><path d="M836,502 L854.5,517" fill="none" stroke="#111" stroke-width="1.2"/><path d="M754,324 L784,337" fill="none" stroke="#111" stroke-width="1.2"/><circle cx="769" cy="330.6" r="5.5" fill="#fff" stroke="#111" stroke-width="1.2"/><path d="M797,346 L827,330" fill="none" stroke="#111" stroke-width="1.2"/><circle cx="812" cy="338.3" r="5.5" fill="#fff" stroke="#111" stroke-width="1.2"/><circle cx="794" cy="366.5" r="6" fill="#fff" stroke="#111" stroke-width="1.2"/><circle cx="708" cy="403.5" r="6" fill="#fff" stroke="#111" stroke-width="1.2"/><path transform="translate(701 410) scale(1)" d="M0,4 Q0,0 6,0 L17,1 Q29,3 30,15 Q30,27 23,35 L10,32 Q16,25 16,19 Q15,12 7,12 L2,11 Q0,9 0,4 Z" fill="#c8c8c8" stroke="#111" stroke-width="1.2"/><path d="M697,442 L712,441 L726,448 L724,462 L694,456 Z" fill="#fff" stroke="#111" stroke-width="1.1"/><path transform="translate(699 452) rotate(10)" d="M-3.5,3 L-3,-2 L0,-4 L3,-2 L3.5,3 L0,1.5 Z" fill="#fff" stroke="#111" stroke-width="1.1"/><path transform="translate(709 455) rotate(10)" d="M-3.5,3 L-3,-2 L0,-4 L3,-2 L3.5,3 L0,1.5 Z" fill="#fff" stroke="#111" stroke-width="1.1"/><path transform="translate(719 458) rotate(10)" d="M-3.5,3 L-3,-2 L0,-4 L3,-2 L3.5,3 L0,1.5 Z" fill="#fff" stroke="#111" stroke-width="1.1"/><path d="M735,459 L735,440 Q740,429 760,427 Q800,423 830,439 Q849,452 846,469 L834,474 Q851,492 855,508 Q848,524 828,529 Q806,534 792,533" fill="none" stroke="#111" stroke-width="1.2"/><path d="M735,459 Q717,466 713,480 Q711,496 726,507 Q735,515 744,522" fill="none" stroke="#111" stroke-width="1.2"/><path d="M705,500 L823,518" fill="none" stroke="#111" stroke-width="6" stroke-linejoin="round" stroke-linecap="butt"/><path d="M705,500 L823,518" fill="none" stroke="#fff" stroke-width="3.2" stroke-linejoin="round" stroke-linecap="butt"/><path d="M741,434 L768,440" fill="none" stroke="#111" stroke-width="1.2"/><circle cx="752.5" cy="436.6" r="5" fill="#fff" stroke="#111" stroke-width="1.2"/><path transform="translate(746 444) scale(0.98)" d="M0,4 Q0,0 6,0 L17,1 Q29,3 30,15 Q30,27 23,35 L10,32 Q16,25 16,19 Q15,12 7,12 L2,11 Q0,9 0,4 Z" fill="#c8c8c8" stroke="#111" stroke-width="1.2"/><path d="M782,440 L830,459 L858,463 L891,460 L901,426 L925,401.5" fill="none" stroke="#111" stroke-width="1.2"/><path d="M934,398 L947,394" fill="none" stroke="#111" stroke-width="1.2"/><circle cx="794" cy="446" r="5.5" fill="#fff" stroke="#111" stroke-width="1.2"/><path transform="translate(788 455) scale(0.98)" d="M0,4 Q0,0 6,0 L17,1 Q29,3 30,15 Q30,27 23,35 L10,32 Q16,25 16,19 Q15,12 7,12 L2,11 Q0,9 0,4 Z" fill="#c8c8c8" stroke="#111" stroke-width="1.2"/><path d="M740,476 L758,472 L770,488 L764,506 L744,500 Z" fill="#fff" stroke="#111" stroke-width="1.1"/><path d="M784,487 L800,484 L812,492 L808,516 L780,510 Z" fill="#fff" stroke="#111" stroke-width="1.1"/><path transform="translate(738 487) rotate(10) scale(0.9)" d="M-3,3 L-4,-1 Q-3,-4 0,-4 Q3,-4 4,-1 L3,3 Z" fill="#fff" stroke="#111" stroke-width="1.1"/><path transform="translate(741 497) rotate(10) scale(0.9)" d="M-3,3 L-4,-1 Q-3,-4 0,-4 Q3,-4 4,-1 L3,3 Z" fill="#fff" stroke="#111" stroke-width="1.1"/><path transform="translate(753 492) rotate(10) scale(0.9)" d="M-3,3 L-4,-1 Q-3,-4 0,-4 Q3,-4 4,-1 L3,3 Z" fill="#fff" stroke="#111" stroke-width="1.1"/><path transform="translate(756 500) rotate(10) scale(0.9)" d="M-3,3 L-4,-1 Q-3,-4 0,-4 Q3,-4 4,-1 L3,3 Z" fill="#fff" stroke="#111" stroke-width="1.1"/><path transform="translate(766 498) rotate(10) scale(0.9)" d="M-3,3 L-4,-1 Q-3,-4 0,-4 Q3,-4 4,-1 L3,3 Z" fill="#fff" stroke="#111" stroke-width="1.1"/><path transform="translate(770 496) rotate(10) scale(0.9)" d="M-3,3 L-4,-1 Q-3,-4 0,-4 Q3,-4 4,-1 L3,3 Z" fill="#fff" stroke="#111" stroke-width="1.1"/><path transform="translate(785 499) rotate(10) scale(0.9)" d="M-3,3 L-4,-1 Q-3,-4 0,-4 Q3,-4 4,-1 L3,3 Z" fill="#fff" stroke="#111" stroke-width="1.1"/><path transform="translate(786 509) rotate(10) scale(0.9)" d="M-3,3 L-4,-1 Q-3,-4 0,-4 Q3,-4 4,-1 L3,3 Z" fill="#fff" stroke="#111" stroke-width="1.1"/><path transform="translate(797 506) rotate(10) scale(0.9)" d="M-3,3 L-4,-1 Q-3,-4 0,-4 Q3,-4 4,-1 L3,3 Z" fill="#fff" stroke="#111" stroke-width="1.1"/><path transform="translate(807 508) rotate(10) scale(0.9)" d="M-3,3 L-4,-1 Q-3,-4 0,-4 Q3,-4 4,-1 L3,3 Z" fill="#fff" stroke="#111" stroke-width="1.1"/><circle cx="830" cy="459" r="6.5" fill="#fff" stroke="#111" stroke-width="1.2"/><circle cx="858" cy="463" r="6" fill="#fff" stroke="#111" stroke-width="1.2"/><circle cx="891" cy="460" r="7" fill="#fff" stroke="#111" stroke-width="1.2"/><circle cx="901" cy="426" r="8" fill="#fff" stroke="#111" stroke-width="1.2"/><circle cx="925" cy="401.5" r="9" fill="#fff" stroke="#111" stroke-width="1.2"/><path d="M727.5,522.5 L731.4,503" fill="none" stroke="#111" stroke-width="1.2"/><path d="M727.5,522.5 L754,505" fill="none" stroke="#111" stroke-width="1.2"/><path d="M746,522.5 L726,507" fill="none" stroke="#111" stroke-width="1.2"/><path d="M622,487 L672,495" fill="none" stroke="#111" stroke-width="1.3"/><path d="M669,490.5 L681,496.3 L668,499.5 Z" fill="#111"/><text x="656" y="582" font-size="7.5" font-weight="bold" fill="#333" font-family="Liberation Sans" letter-spacing="-0.3">Cytoplasm</text></svg>
</body></html>
